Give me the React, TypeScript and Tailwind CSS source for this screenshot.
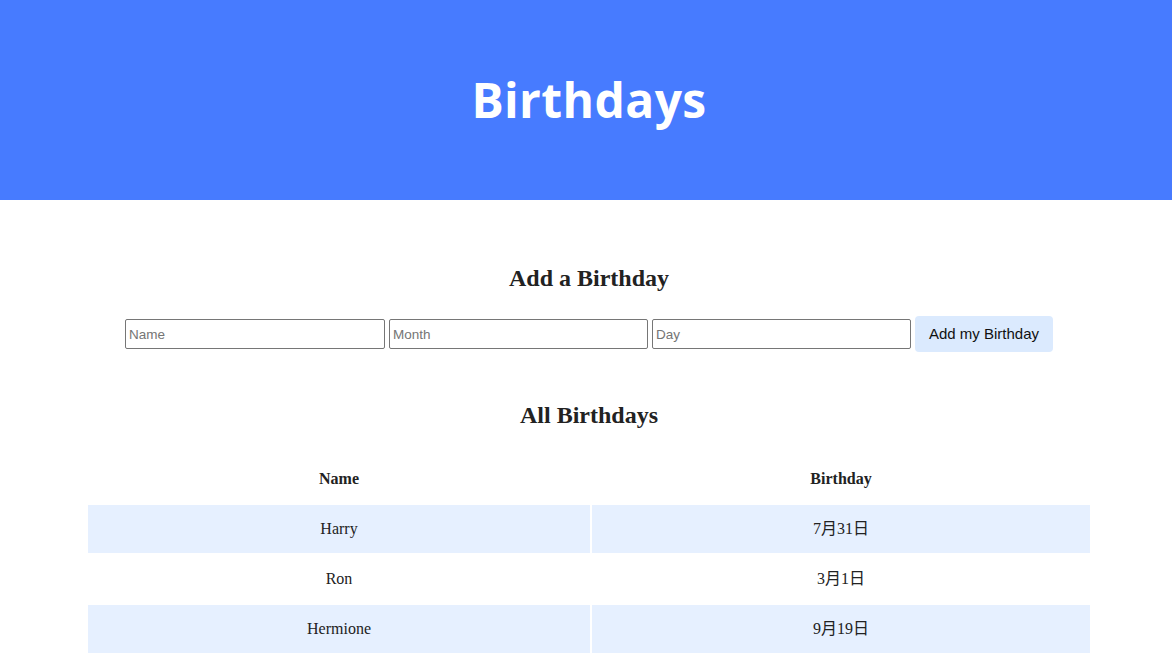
import React from "react";

const rows = [
  { name: "Harry", date: "7月31日" },
  { name: "Ron", date: "3月1日" },
  { name: "Hermione", date: "9月19日" },
];

export default function App() {
  return (
    <div className="min-h-screen bg-white text-[#222]">
      <header className="h-[200px] bg-[#477bff] flex items-center justify-center pl-[6px]">
        <h1
          className="text-white text-[48px] font-bold tracking-[0.4px] leading-none"
          style={{ fontFamily: '"Open Sans", sans-serif' }}
        >
          Birthdays
        </h1>
      </header>
      <main className="pl-[6px] flex flex-col items-center" style={{ fontFamily: '"Liberation Serif", "Noto Sans CJK SC", serif' }}>
        <h2 className="mt-[64px] text-[24px] leading-[28px] font-bold">Add a Birthday</h2>
        <form
          className="mt-[24px] flex items-center gap-[4px]"
          style={{ fontFamily: '"Liberation Sans", Arial, sans-serif' }}
          onSubmit={(e) => e.preventDefault()}
        >
          {["Name", "Month", "Day"].map((p, i) => (
            <input
              key={p}
              placeholder={p}
              className={`h-[30px] ${i === 0 ? "w-[260px]" : "w-[259px]"} border border-[#767676] rounded-[2px] px-[3px] text-[13.5px] placeholder:text-[#757575] bg-white`}
            />
          ))}
          <button className="h-[36px] w-[138px] bg-[#dbeafe] rounded-[4px] text-[15px] text-[#111]">
            Add my Birthday
          </button>
        </form>
        <h2 className="mt-[49px] text-[24px] leading-[28px] font-bold">All Birthdays</h2>
        <table
          className="mt-[24px] border-separate border-spacing-[2px] text-[16px]"
          style={{ fontFamily: '"Liberation Serif", "Noto Sans CJK SC", serif' }}
        >
          <thead>
            <tr>
              <th className="w-[502px] h-[48px] font-bold text-[16px]">Name</th>
              <th className="w-[498px] h-[48px] font-bold text-[16px]">Birthday</th>
            </tr>
          </thead>
          <tbody>
            {rows.map((r, i) => (
              <tr key={r.name} className={i % 2 === 0 ? "bg-[#e6f0ff]" : ""}>
                <td className="h-[48px] text-center">{r.name}</td>
                <td className="h-[48px] text-center">{r.date}</td>
              </tr>
            ))}
          </tbody>
        </table>
      </main>
    </div>
  );
}
